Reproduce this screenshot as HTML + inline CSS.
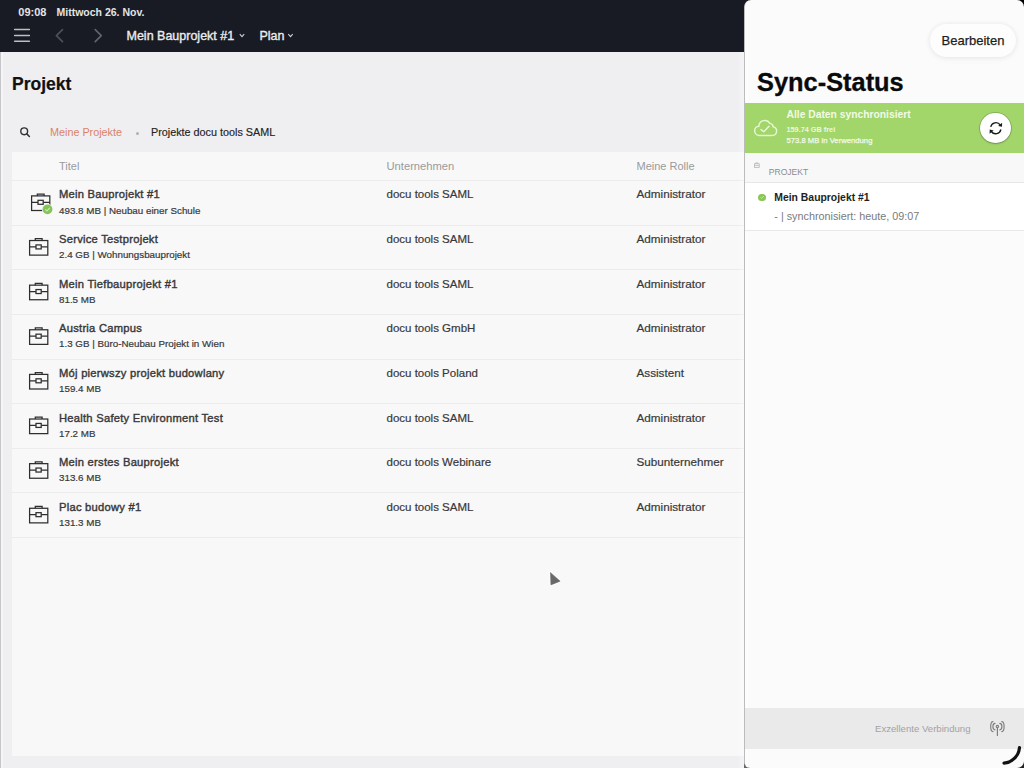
<!DOCTYPE html>
<html><head><meta charset="utf-8">
<style>
*{margin:0;padding:0;box-sizing:border-box}
html,body{width:1024px;height:768px;overflow:hidden}
body{position:relative;background:#efeff1;font-family:"Liberation Sans",sans-serif;}
.a{position:absolute}
.t{position:absolute;white-space:nowrap;line-height:1}
svg{position:absolute;overflow:visible}
</style></head><body>
<div class="a" style="left:0px;top:0px;width:760px;height:52px;background:#181b23;"></div>
<div class="a" style="left:0px;top:52px;width:1px;height:716px;background:#c6c6c8;"></div>
<div class="a" style="left:1px;top:52px;width:2px;height:716px;background:#f5f5f7;"></div>
<div class="t" style="left:18.30px;top:7.00px;font-size:11.0px;font-weight:bold;color:#e4e4e6;">09:08</div>
<div class="t" style="left:56.50px;top:7.00px;font-size:10.5px;font-weight:bold;color:#e4e4e6;">Mittwoch 26. Nov.</div>
<svg style="left:0;top:0" width="1" height="1"><g stroke="#bfbfc3" stroke-width="1.5" stroke-linecap="round"><path d="M14.6 29.5 H29.4"/><path d="M14.6 35.5 H29.4"/><path d="M14.6 41.2 H29.4"/></g></svg>
<svg style="left:0;top:0" width="1" height="1"><path d="M62.5 29.6 L56.4 35.6 L62.5 41.6" fill="none" stroke="#4e5159" stroke-width="1.6" stroke-linecap="round" stroke-linejoin="round"/><path d="M95.2 29.6 L101.3 35.6 L95.2 41.6" fill="none" stroke="#62656c" stroke-width="1.6" stroke-linecap="round" stroke-linejoin="round"/></svg>
<div class="t" style="left:126.50px;top:30.00px;font-size:12.5px;color:#ececee;-webkit-text-stroke:0.35px #ececee;">Mein Bauprojekt #1</div>
<svg style="left:0;top:0" width="1" height="1"><path d="M239.8 34.2 L242 36.6 L244.2 34.2" fill="none" stroke="#d0d0d4" stroke-width="1.1"/><path d="M288.3 34.2 L290.5 36.6 L292.7 34.2" fill="none" stroke="#d0d0d4" stroke-width="1.1"/></svg>
<div class="t" style="left:259.50px;top:30.00px;font-size:12.5px;color:#ececee;-webkit-text-stroke:0.35px #ececee;">Plan</div>
<div class="t" style="left:12.00px;top:76.00px;font-size:17.5px;font-weight:bold;color:#111;-webkit-text-stroke:0.2px #111;">Projekt</div>
<svg style="left:0;top:0" width="1" height="1"><circle cx="24.2" cy="131.3" r="3.4" fill="none" stroke="#333" stroke-width="1.4"/><path d="M26.8 133.9 L29.4 136.5" stroke="#333" stroke-width="1.5" stroke-linecap="round"/></svg>
<div class="t" style="left:50.00px;top:127.00px;font-size:10.8px;color:#d9826a;">Meine Projekte</div>
<div class="a" style="left:135.5px;top:131.5px;width:3px;height:3px;background:#b0b0b0;border-radius:50%;"></div>
<div class="t" style="left:151.00px;top:127.00px;font-size:10.8px;color:#222;-webkit-text-stroke:0.15px #222;">Projekte docu tools SAML</div>
<div class="a" style="left:12px;top:152px;width:732px;height:604px;background:#f8f8f8;"></div>
<div class="t" style="left:59.00px;top:161.00px;font-size:11.0px;color:#9a9a9c;">Titel</div>
<div class="t" style="left:386.50px;top:161.00px;font-size:11.2px;color:#9a9a9c;">Unternehmen</div>
<div class="t" style="left:636.50px;top:161.00px;font-size:11.0px;color:#9a9a9c;">Meine Rolle</div>
<div class="a" style="left:12px;top:180.0px;width:732px;height:1px;background:#ececec;"></div>
<div class="t" style="left:59.00px;top:189.00px;font-size:11.2px;color:#38383a;-webkit-text-stroke:0.4px #38383a;letter-spacing:0.25px;">Mein Bauprojekt #1</div>
<div class="t" style="left:59.00px;top:206.00px;font-size:9.8px;color:#38383a;-webkit-text-stroke:0.2px #38383a;">493.8 MB | Neubau einer Schule</div>
<div class="t" style="left:386.50px;top:189.00px;font-size:11.5px;color:#38383a;-webkit-text-stroke:0.2px #38383a;">docu tools SAML</div>
<div class="t" style="left:636.50px;top:188.00px;font-size:11.7px;color:#38383a;-webkit-text-stroke:0.2px #38383a;">Administrator</div>
<svg style="left:0;top:0" width="1" height="1"><g fill="none" stroke="#2e2e30" stroke-width="1.25">
<rect x="31.6" y="195.9" width="18.2" height="14.6"/>
<path d="M37.3 195.9 V194.1 H44.1 V195.9"/>
<path d="M31.6 202.29999999999998 H38 M43.2 202.29999999999998 H49.8"/>
<rect x="38" y="200.29999999999998" width="5.2" height="4"/>
</g><circle cx="47.5" cy="209.29999999999998" r="5.6" fill="#f8f8f8"/><circle cx="47.5" cy="209.29999999999998" r="4.9" fill="#86c45a"/>
<path d="M45.3 209.4 L46.9 210.9 L49.8 207.9" fill="none" stroke="#c8eab0" stroke-width="1.1"/></svg>
<div class="a" style="left:12px;top:224.62px;width:732px;height:1px;background:#ececec;"></div>
<div class="t" style="left:59.00px;top:234.00px;font-size:11.2px;color:#38383a;-webkit-text-stroke:0.4px #38383a;letter-spacing:0.25px;">Service Testprojekt</div>
<div class="t" style="left:59.00px;top:250.00px;font-size:9.8px;color:#38383a;-webkit-text-stroke:0.2px #38383a;">2.4 GB | Wohnungsbauprojekt</div>
<div class="t" style="left:386.50px;top:234.00px;font-size:11.5px;color:#38383a;-webkit-text-stroke:0.2px #38383a;">docu tools SAML</div>
<div class="t" style="left:636.50px;top:233.00px;font-size:11.7px;color:#38383a;-webkit-text-stroke:0.2px #38383a;">Administrator</div>
<svg style="left:0;top:0" width="1" height="1"><g fill="none" stroke="#2e2e30" stroke-width="1.25">
<rect x="29.6" y="240.525" width="18.2" height="14.6"/>
<path d="M35.3 240.525 V238.725 H42.1 V240.525"/>
<path d="M29.6 246.92499999999998 H36 M41.2 246.92499999999998 H47.8"/>
<rect x="36" y="244.92499999999998" width="5.2" height="4"/>
</g></svg>
<div class="a" style="left:12px;top:269.25px;width:732px;height:1px;background:#ececec;"></div>
<div class="t" style="left:59.00px;top:279.00px;font-size:11.2px;color:#38383a;-webkit-text-stroke:0.4px #38383a;letter-spacing:0.25px;">Mein Tiefbauprojekt #1</div>
<div class="t" style="left:59.00px;top:295.00px;font-size:9.8px;color:#38383a;-webkit-text-stroke:0.2px #38383a;">81.5 MB</div>
<div class="t" style="left:386.50px;top:279.00px;font-size:11.5px;color:#38383a;-webkit-text-stroke:0.2px #38383a;">docu tools SAML</div>
<div class="t" style="left:636.50px;top:278.00px;font-size:11.7px;color:#38383a;-webkit-text-stroke:0.2px #38383a;">Administrator</div>
<svg style="left:0;top:0" width="1" height="1"><g fill="none" stroke="#2e2e30" stroke-width="1.25">
<rect x="29.6" y="285.15000000000003" width="18.2" height="14.6"/>
<path d="M35.3 285.15000000000003 V283.35 H42.1 V285.15000000000003"/>
<path d="M29.6 291.55 H36 M41.2 291.55 H47.8"/>
<rect x="36" y="289.55" width="5.2" height="4"/>
</g></svg>
<div class="a" style="left:12px;top:313.88px;width:732px;height:1px;background:#ececec;"></div>
<div class="t" style="left:59.00px;top:323.00px;font-size:11.2px;color:#38383a;-webkit-text-stroke:0.4px #38383a;letter-spacing:0.25px;">Austria Campus</div>
<div class="t" style="left:59.00px;top:339.00px;font-size:9.8px;color:#38383a;-webkit-text-stroke:0.2px #38383a;">1.3 GB | Büro-Neubau Projekt in Wien</div>
<div class="t" style="left:386.50px;top:323.00px;font-size:11.5px;color:#38383a;-webkit-text-stroke:0.2px #38383a;">docu tools GmbH</div>
<div class="t" style="left:636.50px;top:322.00px;font-size:11.7px;color:#38383a;-webkit-text-stroke:0.2px #38383a;">Administrator</div>
<svg style="left:0;top:0" width="1" height="1"><g fill="none" stroke="#2e2e30" stroke-width="1.25">
<rect x="29.6" y="329.77500000000003" width="18.2" height="14.6"/>
<path d="M35.3 329.77500000000003 V327.975 H42.1 V329.77500000000003"/>
<path d="M29.6 336.175 H36 M41.2 336.175 H47.8"/>
<rect x="36" y="334.175" width="5.2" height="4"/>
</g></svg>
<div class="a" style="left:12px;top:358.5px;width:732px;height:1px;background:#ececec;"></div>
<div class="t" style="left:59.00px;top:368.00px;font-size:11.2px;color:#38383a;-webkit-text-stroke:0.4px #38383a;letter-spacing:0.25px;">Mój pierwszy projekt budowlany</div>
<div class="t" style="left:59.00px;top:384.00px;font-size:9.8px;color:#38383a;-webkit-text-stroke:0.2px #38383a;">159.4 MB</div>
<div class="t" style="left:386.50px;top:368.00px;font-size:11.5px;color:#38383a;-webkit-text-stroke:0.2px #38383a;">docu tools Poland</div>
<div class="t" style="left:636.50px;top:367.00px;font-size:11.7px;color:#38383a;-webkit-text-stroke:0.2px #38383a;">Assistent</div>
<svg style="left:0;top:0" width="1" height="1"><g fill="none" stroke="#2e2e30" stroke-width="1.25">
<rect x="29.6" y="374.40000000000003" width="18.2" height="14.6"/>
<path d="M35.3 374.40000000000003 V372.6 H42.1 V374.40000000000003"/>
<path d="M29.6 380.8 H36 M41.2 380.8 H47.8"/>
<rect x="36" y="378.8" width="5.2" height="4"/>
</g></svg>
<div class="a" style="left:12px;top:403.12px;width:732px;height:1px;background:#ececec;"></div>
<div class="t" style="left:59.00px;top:413.00px;font-size:11.2px;color:#38383a;-webkit-text-stroke:0.4px #38383a;letter-spacing:0.25px;">Health Safety Environment Test</div>
<div class="t" style="left:59.00px;top:429.00px;font-size:9.8px;color:#38383a;-webkit-text-stroke:0.2px #38383a;">17.2 MB</div>
<div class="t" style="left:386.50px;top:413.00px;font-size:11.5px;color:#38383a;-webkit-text-stroke:0.2px #38383a;">docu tools SAML</div>
<div class="t" style="left:636.50px;top:412.00px;font-size:11.7px;color:#38383a;-webkit-text-stroke:0.2px #38383a;">Administrator</div>
<svg style="left:0;top:0" width="1" height="1"><g fill="none" stroke="#2e2e30" stroke-width="1.25">
<rect x="29.6" y="419.02500000000003" width="18.2" height="14.6"/>
<path d="M35.3 419.02500000000003 V417.225 H42.1 V419.02500000000003"/>
<path d="M29.6 425.425 H36 M41.2 425.425 H47.8"/>
<rect x="36" y="423.425" width="5.2" height="4"/>
</g></svg>
<div class="a" style="left:12px;top:447.75px;width:732px;height:1px;background:#ececec;"></div>
<div class="t" style="left:59.00px;top:457.00px;font-size:11.2px;color:#38383a;-webkit-text-stroke:0.4px #38383a;letter-spacing:0.25px;">Mein erstes Bauprojekt</div>
<div class="t" style="left:59.00px;top:473.00px;font-size:9.8px;color:#38383a;-webkit-text-stroke:0.2px #38383a;">313.6 MB</div>
<div class="t" style="left:386.50px;top:457.00px;font-size:11.5px;color:#38383a;-webkit-text-stroke:0.2px #38383a;">docu tools Webinare</div>
<div class="t" style="left:636.50px;top:456.00px;font-size:11.7px;color:#38383a;-webkit-text-stroke:0.2px #38383a;">Subunternehmer</div>
<svg style="left:0;top:0" width="1" height="1"><g fill="none" stroke="#2e2e30" stroke-width="1.25">
<rect x="29.6" y="463.65000000000003" width="18.2" height="14.6"/>
<path d="M35.3 463.65000000000003 V461.85 H42.1 V463.65000000000003"/>
<path d="M29.6 470.05 H36 M41.2 470.05 H47.8"/>
<rect x="36" y="468.05" width="5.2" height="4"/>
</g></svg>
<div class="a" style="left:12px;top:492.38px;width:732px;height:1px;background:#ececec;"></div>
<div class="t" style="left:59.00px;top:502.00px;font-size:11.2px;color:#38383a;-webkit-text-stroke:0.4px #38383a;letter-spacing:0.25px;">Plac budowy #1</div>
<div class="t" style="left:59.00px;top:518.00px;font-size:9.8px;color:#38383a;-webkit-text-stroke:0.2px #38383a;">131.3 MB</div>
<div class="t" style="left:386.50px;top:502.00px;font-size:11.5px;color:#38383a;-webkit-text-stroke:0.2px #38383a;">docu tools SAML</div>
<div class="t" style="left:636.50px;top:501.00px;font-size:11.7px;color:#38383a;-webkit-text-stroke:0.2px #38383a;">Administrator</div>
<svg style="left:0;top:0" width="1" height="1"><g fill="none" stroke="#2e2e30" stroke-width="1.25">
<rect x="29.6" y="508.27500000000003" width="18.2" height="14.6"/>
<path d="M35.3 508.27500000000003 V506.475 H42.1 V508.27500000000003"/>
<path d="M29.6 514.6750000000001 H36 M41.2 514.6750000000001 H47.8"/>
<rect x="36" y="512.6750000000001" width="5.2" height="4"/>
</g></svg>
<div class="a" style="left:12px;top:537px;width:732px;height:1px;background:#ececec;"></div>
<div class="a" style="left:737px;top:52px;width:7px;height:716px;background:linear-gradient(90deg,rgba(255,255,255,0),rgba(255,255,255,0.35));"></div>
<svg style="left:0;top:0" width="1" height="1"><path d="M550.4 572.4 L560.2 581.2 L550.9 584.9 Z" fill="none" stroke="#ffffff" stroke-width="2.2" stroke-linejoin="round"/><path d="M550.4 572.4 L560.2 581.2 L550.9 584.9 Z" fill="#686868" stroke="#686868" stroke-width="0.5" stroke-linejoin="round"/></svg>
<div class="a" style="left:1004px;top:0px;width:20px;height:20px;background:#000;"></div>
<div class="a" style="left:1004px;top:748px;width:20px;height:20px;background:#222;"></div>
<div class="a" style="left:744px;top:748px;width:12px;height:20px;background:#666;"></div>
<div class="a" style="left:744px;top:0;width:280px;height:768px;background:#fbfbfb;border-radius:7px 7px 7px 6px;overflow:hidden;border-left:1px solid #bcbcbc">
<div class="a" style="left:0px;top:0px;width:3px;height:768px;background:#fdfdfd;"></div>
<div class="a" style="left:185px;top:24px;width:86px;height:33px;background:#fdfdfd;border-radius:17px;box-shadow:0 0 5px rgba(0,0,0,0.07),0 2px 7px rgba(0,0,0,0.04);"></div>
<div class="t" style="left:196.50px;top:34.00px;font-size:13.0px;color:#1e1e20;-webkit-text-stroke:0.25px #1e1e20;">Bearbeiten</div>
<div class="t" style="left:12.00px;top:70.00px;font-size:25.4px;font-weight:bold;color:#0a0a0a;-webkit-text-stroke:0.3px #0a0a0a;">Sync-Status</div>
<div class="a" style="left:0px;top:103px;width:280px;height:50px;background:#a2d56a;"></div>
<div class="t" style="left:41.50px;top:110.00px;font-size:10.3px;font-weight:bold;color:#f2fae6;">Alle Daten synchronisiert</div>
<div class="t" style="left:41.50px;top:126.00px;font-size:7.3px;font-weight:bold;color:#eef8e0;">159.74 GB frei</div>
<div class="t" style="left:41.50px;top:137.00px;font-size:7.7px;color:#f2fae8;-webkit-text-stroke:0.25px #f2fae8;">573.8 MB in Verwendung</div>
<svg style="left:0;top:0" width="1" height="1"><g transform="translate(-745,0)" fill="none" stroke="#e6f8cf" stroke-width="1.45" stroke-linejoin="round" stroke-linecap="round">
<path d="M759.6 135.4 H772.4 A4.3 4.3 0 0 0 773.2 126.9 A3.8 3.8 0 0 0 769.9 123.4 A5.9 5.9 0 0 0 758.9 126.2 A4.6 4.6 0 0 0 759.6 135.4 Z"/>
<path d="M761 129.6 L763.8 131.8 L769 126.2"/></g></svg>
<div class="a" style="left:235.29999999999995px;top:112.7px;width:30.6px;height:30.6px;background:#ffffff;border-radius:50%;box-shadow:0 0 0 0.7px rgba(60,90,40,0.35),0 1px 2px rgba(0,0,0,0.2);"></div>
<svg style="left:0;top:0" width="1" height="1"><g transform="translate(-745,0.3)" fill="none" stroke="#1a1a1a" stroke-width="1.35">
<path d="M990.7 126.6 A5.3 5.3 0 0 1 1000.2 124.6"/>
<path d="M1000.9 129.2 A5.3 5.3 0 0 1 991.4 131.2"/>
</g><g transform="translate(-745,0.3)" fill="#1a1a1a"><path d="M1002.1 122.4 L1002 126.5 L998.1 125.6 Z"/><path d="M989.6 133.4 L989.7 129.3 L993.6 130.2 Z"/></g></svg>
<div class="a" style="left:0px;top:153px;width:280px;height:29px;background:#f8f8f8;"></div>
<div class="a" style="left:0px;top:181.5px;width:280px;height:1px;background:#e6e6e6;"></div>
<svg style="left:0;top:0" width="1" height="1"><g transform="translate(-745,0)" fill="none" stroke="#b8b8b8" stroke-width="0.8"><rect x="754.4" y="163.8" width="4.8" height="3.6"/><path d="M755.8 163.8 V162.8 H757.8 V163.8 M754.4 165.6 H759.2"/></g></svg>
<div class="t" style="left:23.70px;top:168.00px;font-size:8.6px;color:#8c8c8e;">PROJEKT</div>
<div class="a" style="left:0px;top:182.5px;width:280px;height:47.5px;background:#ffffff;"></div>
<div class="a" style="left:0px;top:230px;width:280px;height:1px;background:#e8e8e8;"></div>
<div class="a" style="left:13.399999999999977px;top:193.5px;width:7.2px;height:7.2px;background:#8cc658;border-radius:50%;"></div>
<svg style="left:0;top:0" width="1" height="1"><path transform="translate(-745,0)" d="M760.4 197.3 L761.6 198.4 L763.8 196" fill="none" stroke="#c4eaa4" stroke-width="0.9"/></svg>
<div class="t" style="left:29.30px;top:193.00px;font-size:10.4px;font-weight:bold;color:#1e1e20;">Mein Bauprojekt #1</div>
<div class="t" style="left:29.30px;top:211.00px;font-size:10.8px;color:#7a7a7c;">- | synchronisiert: heute, 09:07</div>
<div class="a" style="left:0px;top:708px;width:280px;height:41px;background:#eaeaea;"></div>
<div class="t" style="left:130.00px;top:724.00px;font-size:9.6px;color:#a2a2a4;">Exzellente Verbindung</div>
<svg style="left:0;top:0" width="1" height="1"><g transform="translate(-745,0)" fill="none" stroke="#7c7c7e" stroke-width="1.15" stroke-linecap="round">
<path d="M993 721.6 A2.3 5 0 0 0 993 731.6"/><path d="M1001.8 721.6 A2.3 5 0 0 1 1001.8 731.6"/>
<path d="M995 723.4 A2.1 3.2 0 0 0 995 729.8"/><path d="M999.8 723.4 A2.1 3.2 0 0 1 999.8 729.8"/>
<circle cx="997.4" cy="726.6" r="1.2"/><path d="M997.4 728 V735.4"/></g></svg>
<svg style="left:0;top:0" width="1" height="1"><g transform="translate(-745,0)"><path d="M1019.5 747.5 A17 17 0 0 1 1004 763.2" fill="none" stroke="#111" stroke-width="3.2" stroke-linecap="round"/></g></svg>
</div>
</body></html>
